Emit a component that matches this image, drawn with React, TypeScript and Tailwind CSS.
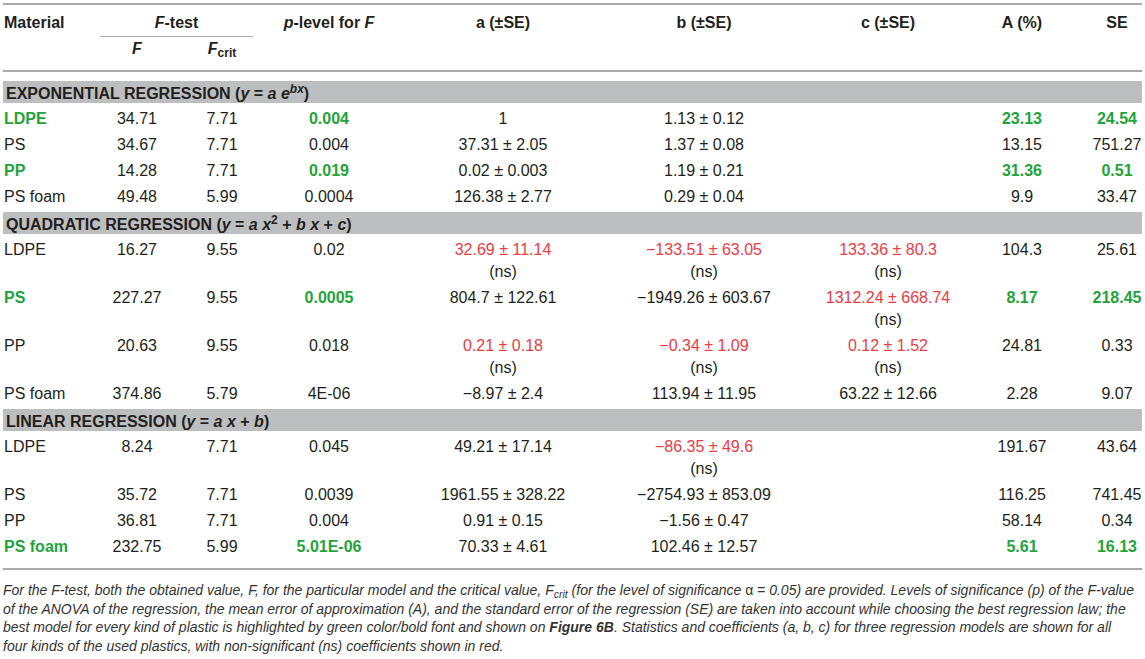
import React from 'react';

type Cell = string | { v: string; ns?: boolean; g?: boolean };
type Row = { name: string; g?: boolean; cells: Cell[] };

const COLS = 'grid grid-cols-[97px_74px_96px_118px_230px_172px_196px_72px_84px]';

const exponential: Row[] = [
  { name: 'LDPE', g: true, cells: ['34.71', '7.71', { v: '0.004', g: true }, '1', '1.13 ± 0.12', '', { v: '23.13', g: true }, { v: '24.54', g: true }] },
  { name: 'PS', cells: ['34.67', '7.71', '0.004', '37.31 ± 2.05', '1.37 ± 0.08', '', '13.15', '751.27'] },
  { name: 'PP', g: true, cells: ['14.28', '7.71', { v: '0.019', g: true }, '0.02 ± 0.003', '1.19 ± 0.21', '', { v: '31.36', g: true }, { v: '0.51', g: true }] },
  { name: 'PS foam', cells: ['49.48', '5.99', '0.0004', '126.38 ± 2.77', '0.29 ± 0.04', '', '9.9', '33.47'] },
];

const quadratic: Row[] = [
  { name: 'LDPE', cells: ['16.27', '9.55', '0.02', { v: '32.69 ± 11.14', ns: true }, { v: '−133.51 ± 63.05', ns: true }, { v: '133.36 ± 80.3', ns: true }, '104.3', '25.61'] },
  { name: 'PS', g: true, cells: ['227.27', '9.55', { v: '0.0005', g: true }, '804.7 ± 122.61', '−1949.26 ± 603.67', { v: '1312.24 ± 668.74', ns: true }, { v: '8.17', g: true }, { v: '218.45', g: true }] },
  { name: 'PP', cells: ['20.63', '9.55', '0.018', { v: '0.21 ± 0.18', ns: true }, { v: '−0.34 ± 1.09', ns: true }, { v: '0.12 ± 1.52', ns: true }, '24.81', '0.33'] },
  { name: 'PS foam', cells: ['374.86', '5.79', '4E-06', '−8.97 ± 2.4', '113.94 ± 11.95', '63.22 ± 12.66', '2.28', '9.07'] },
];

const linear: Row[] = [
  { name: 'LDPE', cells: ['8.24', '7.71', '0.045', '49.21 ± 17.14', { v: '−86.35 ± 49.6', ns: true }, '', '191.67', '43.64'] },
  { name: 'PS', cells: ['35.72', '7.71', '0.0039', '1961.55 ± 328.22', '−2754.93 ± 853.09', '', '116.25', '741.45'] },
  { name: 'PP', cells: ['36.81', '7.71', '0.004', '0.91 ± 0.15', '−1.56 ± 0.47', '', '58.14', '0.34'] },
  { name: 'PS foam', g: true, cells: ['232.75', '5.99', { v: '5.01E-06', g: true }, '70.33 ± 4.61', '102.46 ± 12.57', '', { v: '5.61', g: true }, { v: '16.13', g: true }] },
];

function ValueCell({ cell, last }: { cell: Cell; last: boolean }) {
  const c = typeof cell === 'string' ? { v: cell } : cell;
  return (
    <div className={`text-center ${last ? 'pl-[34px]' : ''}`}>
      <div className={c.ns ? 'text-[#ee3b44]' : c.g ? 'text-[#1fa33b] font-bold' : ''}>{c.v}</div>
      {c.ns && <div>(ns)</div>}
    </div>
  );
}

function DataRow({ row }: { row: Row }) {
  return (
    <div className={`${COLS} py-[2px] leading-[22px]`}>
      <div className={`pl-[1px] ${row.g ? 'text-[#1fa33b] font-bold' : ''}`}>{row.name}</div>
      {row.cells.map((c, i) => (
        <ValueCell key={i} cell={c} last={i === row.cells.length - 1} />
      ))}
    </div>
  );
}

function Band({ children }: { children: React.ReactNode }) {
  return (
    <div className="mt-[2px] mb-[3px] h-[22px] bg-[#bcbec0] pl-[3px] font-bold leading-[25px] whitespace-nowrap">
      {children}
    </div>
  );
}

export default function App() {
  return (
    <div className="w-[1145px] h-[659px] overflow-hidden bg-white px-[3px] pt-[3px] text-[16px] text-[#231f20] font-['Liberation_Sans',Arial,sans-serif]">
      <div className="h-[2px] bg-[#a7a9ac]" />

      {/* Header */}
      <div className={`${COLS} grid-rows-[32px_33px] font-bold leading-[22px]`}>
        <div className="row-span-2 pt-[7px] pl-[1px]">Material</div>
        <div className="col-span-2">
          <div className="w-[153px] h-[32px] pt-[7px] text-center border-b border-[#a7a9ac]">
            <i>F</i>-test
          </div>
        </div>
        <div className="row-span-2 pt-[7px] text-center">
          <i>p</i>-level for <i>F</i>
        </div>
        <div className="row-span-2 pt-[7px] text-center">a (±SE)</div>
        <div className="row-span-2 pt-[7px] text-center">b (±SE)</div>
        <div className="row-span-2 pt-[7px] text-center">c (±SE)</div>
        <div className="row-span-2 pt-[7px] text-center">A (%)</div>
        <div className="row-span-2 pt-[7px] pl-[34px] text-center">SE</div>
        <div className="col-start-2 row-start-2 pt-[1px] text-center">
          <i>F</i>
        </div>
        <div className="col-start-3 row-start-2 pt-[1px] text-center">
          <i>F</i>
          <sub className="font-bold">crit</sub>
        </div>
      </div>

      <div className="h-[2px] bg-[#a7a9ac] mb-[9px]" />

      <Band>
        EXPONENTIAL REGRESSION (<i>y</i> = <i>a e</i>
        <sup><i>bx</i></sup>)
      </Band>
      {exponential.map((r) => (
        <DataRow key={'e' + r.name} row={r} />
      ))}

      <Band>
        QUADRATIC REGRESSION (<i>y</i> = <i>a x</i>
        <sup>2</sup> + <i>b x</i> + <i>c</i>)
      </Band>
      {quadratic.map((r) => (
        <DataRow key={'q' + r.name} row={r} />
      ))}

      <Band>
        LINEAR REGRESSION (<i>y</i> = <i>a x</i> + <i>b</i>)
      </Band>
      {linear.map((r) => (
        <DataRow key={'l' + r.name} row={r} />
      ))}

      <div className="mt-[8px] h-[2px] bg-[#a7a9ac]" />

      {/* Footnote */}
      <div className="pt-[11px] italic text-[14px] leading-[18.5px] text-[#333] whitespace-nowrap">
        <div>
          For the F-test, both the obtained value, F, for the particular model and the critical value, F<sub>crit</sub> (for the level of significance <span className="not-italic">α</span> = 0.05) are provided. Levels of significance (p) of the F-value
        </div>
        <div>
          of the ANOVA of the regression, the mean error of approximation (A), and the standard error of the regression (SE) are taken into account while choosing the best regression law; the
        </div>
        <div>
          best model for every kind of plastic is highlighted by green color/bold font and shown on <b>Figure 6B</b>. Statistics and coefficients (a, b, c) for three regression models are shown for all
        </div>
        <div>four kinds of the used plastics, with non-significant (ns) coefficients shown in red.</div>
      </div>
    </div>
  );
}
